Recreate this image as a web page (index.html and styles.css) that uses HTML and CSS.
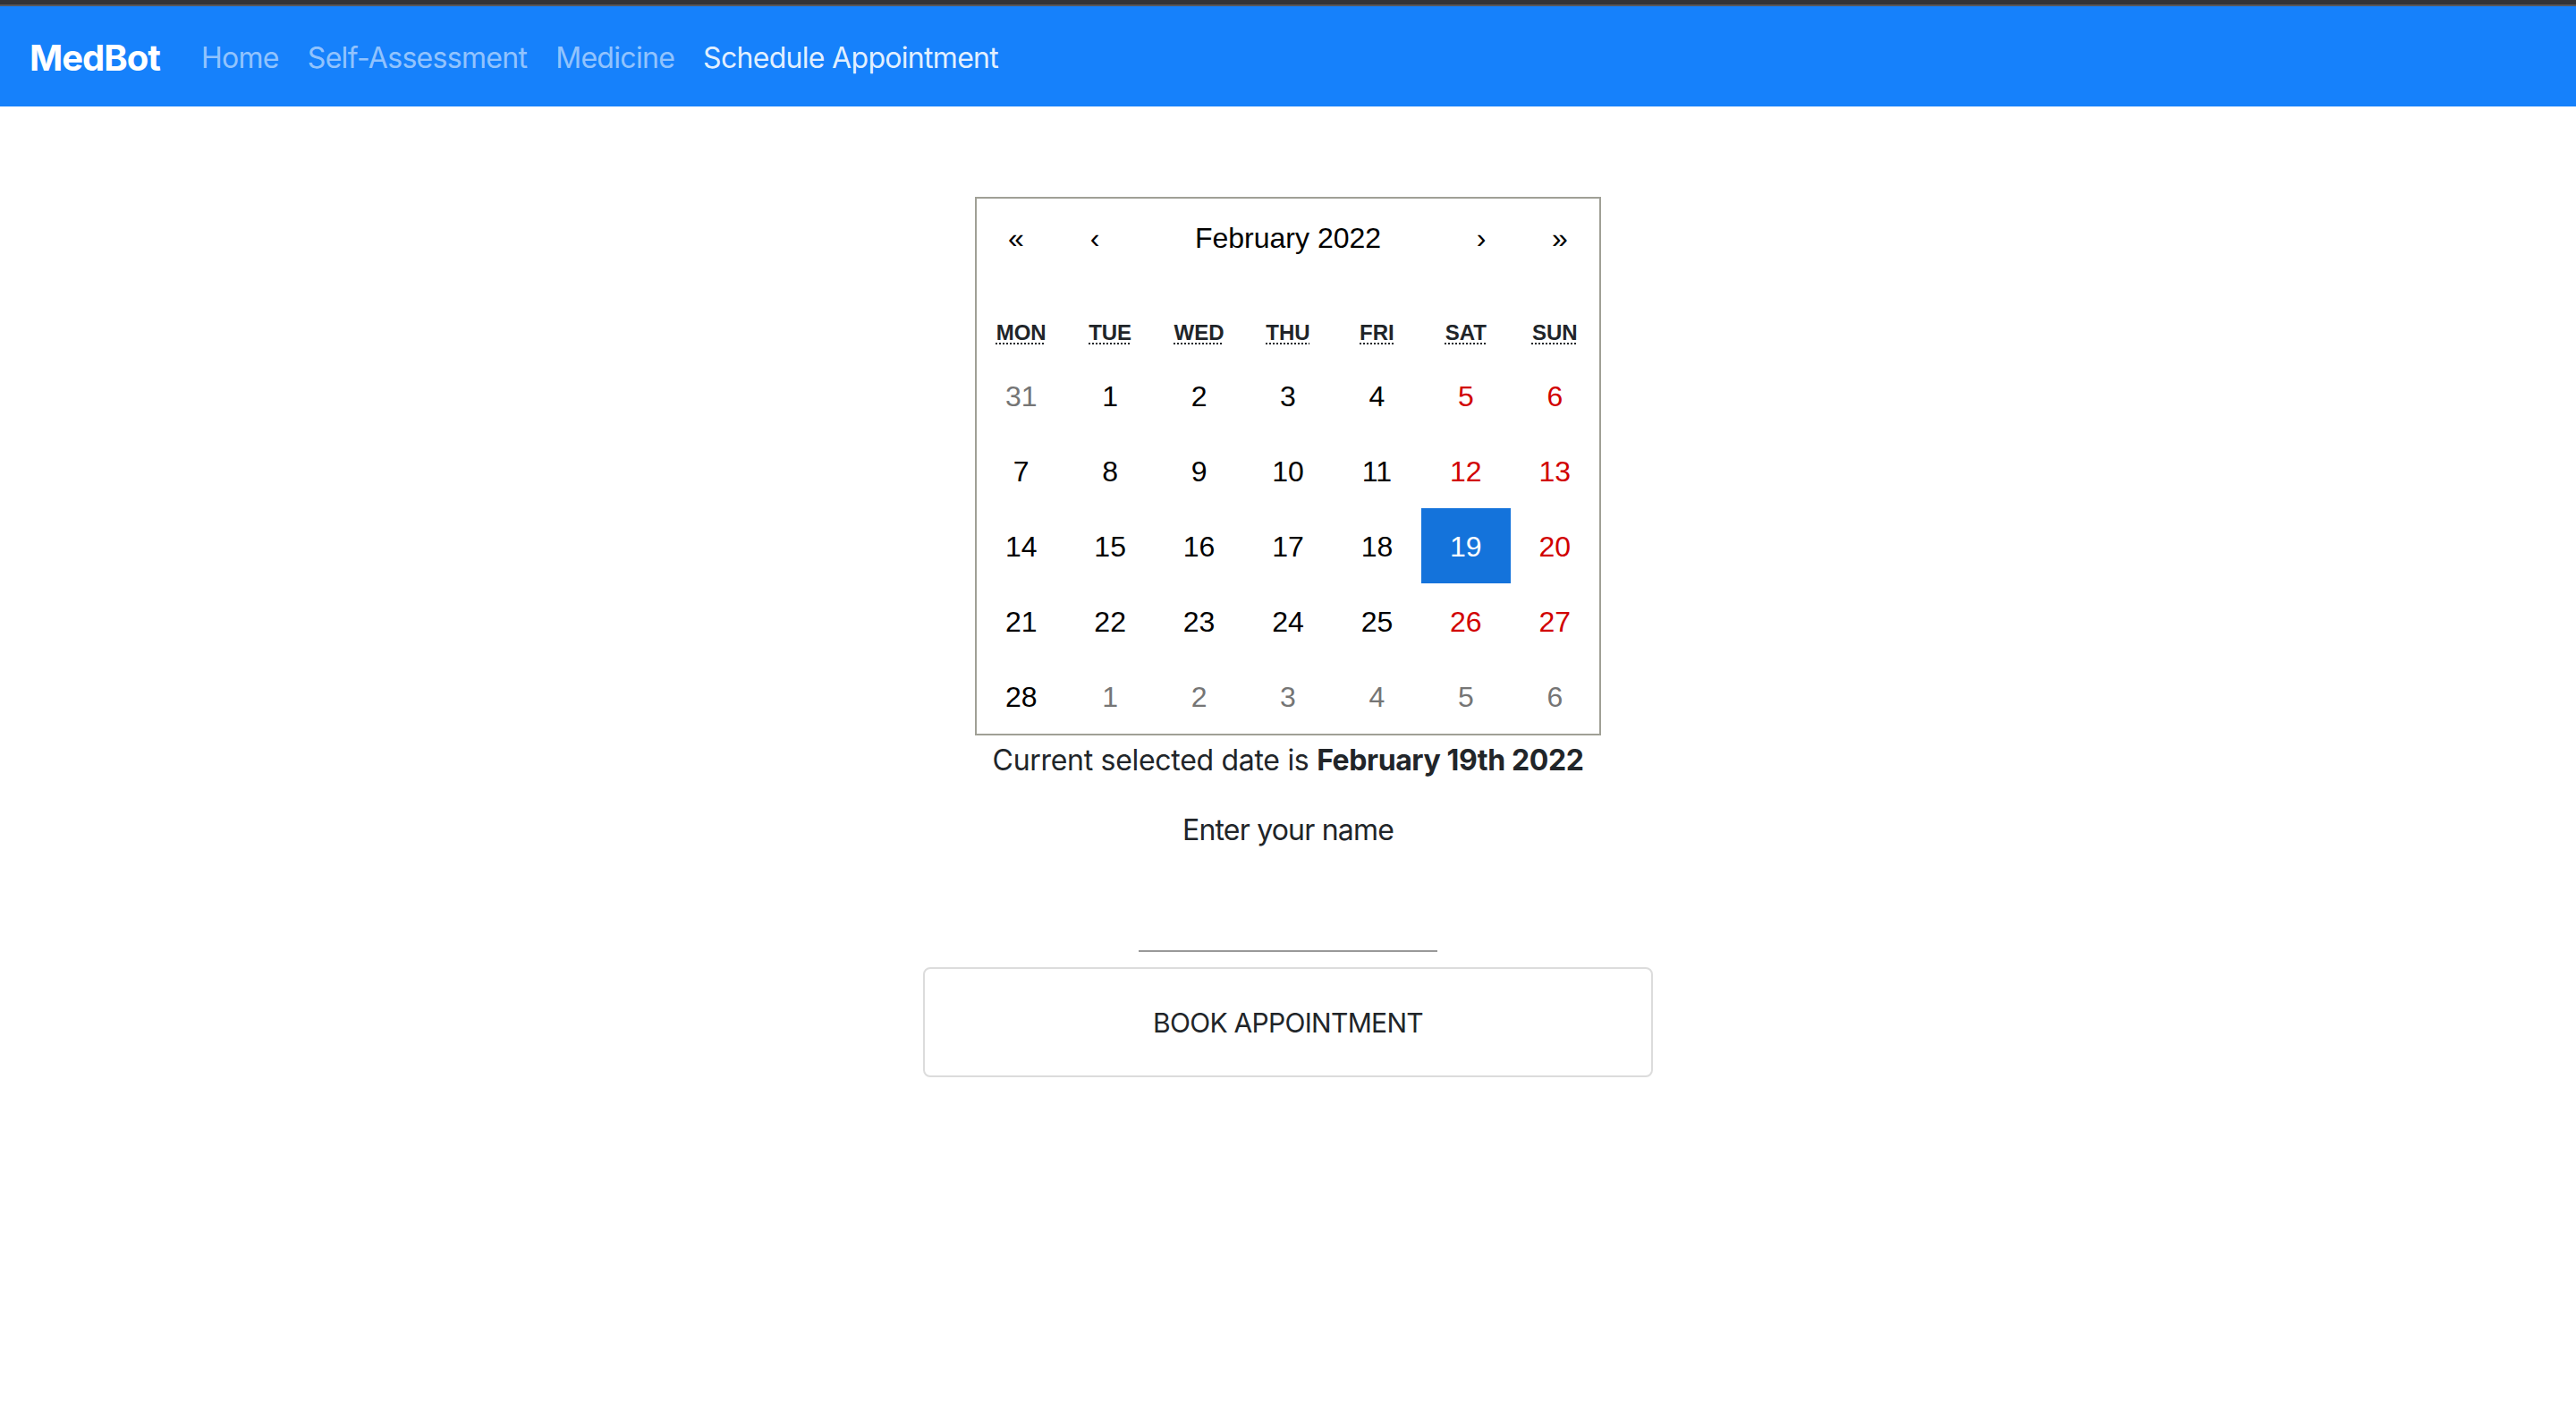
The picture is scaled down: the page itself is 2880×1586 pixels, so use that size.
FILE: index.html
```html
<!DOCTYPE html>
<html lang="en">
<head>
<meta charset="utf-8">
<title>MedBot - Schedule Appointment</title>
<link rel="stylesheet" href="styles.css">
</head>
<body>
<div class="topband"></div>
<nav class="navbar">
  <a class="brand" href="#">MedBot</a>
  <ul class="nav-links">
    <li><a class="nav-link" href="#">Home</a></li>
    <li><a class="nav-link" href="#">Self-Assessment</a></li>
    <li><a class="nav-link" href="#">Medicine</a></li>
    <li><a class="nav-link active" href="#">Schedule Appointment</a></li>
  </ul>
</nav>
<main class="page">
  <div class="calendar">
    <div class="cal-nav">
      <button class="cal-arrow">«</button>
      <button class="cal-arrow">‹</button>
      <button class="cal-label">February 2022</button>
      <button class="cal-arrow">›</button>
      <button class="cal-arrow">»</button>
    </div>
    <div class="cal-weekdays">
      <div class="wd"><abbr title="Monday">Mon</abbr></div>
      <div class="wd"><abbr title="Tuesday">Tue</abbr></div>
      <div class="wd"><abbr title="Wednesday">Wed</abbr></div>
      <div class="wd"><abbr title="Thursday">Thu</abbr></div>
      <div class="wd"><abbr title="Friday">Fri</abbr></div>
      <div class="wd"><abbr title="Saturday">Sat</abbr></div>
      <div class="wd"><abbr title="Sunday">Sun</abbr></div>
    </div>
    <div class="cal-days">
      <button class="tile other">31</button>
      <button class="tile">1</button>
      <button class="tile">2</button>
      <button class="tile">3</button>
      <button class="tile">4</button>
      <button class="tile weekend">5</button>
      <button class="tile weekend">6</button>
      <button class="tile">7</button>
      <button class="tile">8</button>
      <button class="tile">9</button>
      <button class="tile">10</button>
      <button class="tile">11</button>
      <button class="tile weekend">12</button>
      <button class="tile weekend">13</button>
      <button class="tile">14</button>
      <button class="tile">15</button>
      <button class="tile">16</button>
      <button class="tile">17</button>
      <button class="tile">18</button>
      <button class="tile active">19</button>
      <button class="tile weekend">20</button>
      <button class="tile">21</button>
      <button class="tile">22</button>
      <button class="tile">23</button>
      <button class="tile">24</button>
      <button class="tile">25</button>
      <button class="tile weekend">26</button>
      <button class="tile weekend">27</button>
      <button class="tile">28</button>
      <button class="tile other">1</button>
      <button class="tile other">2</button>
      <button class="tile other">3</button>
      <button class="tile other">4</button>
      <button class="tile other">5</button>
      <button class="tile other">6</button>
    </div>
  </div>
  <p class="selected">Current selected date is <b>February 19th 2022</b></p>
  <p class="label">Enter your name</p>
  <input class="name-input" type="text" aria-label="Enter your name">
  <button class="book-btn">BOOK APPOINTMENT</button>
</main>
</body>
</html>
```
FILE: styles.css
```css
* { box-sizing: border-box; }

html, body {
  margin: 0;
  padding: 0;
  background: #fff;
}

body {
  font-family: Inter, "Noto Sans", "Liberation Sans", sans-serif;
  color: #212529;
  font-size: 32px;
  line-height: 48px;
  letter-spacing: -0.5px;
}

.topband {
  height: 7px;
  background: #333337;
  border-bottom: 2px solid #58585c;
}

.navbar {
  height: 112px;
  background: #1681fb;
  display: flex;
  align-items: center;
  padding: 4px 0 0 33px;
}

.brand {
  font-size: 40px;
  font-weight: 700;
  color: #fff;
  text-decoration: none;
  margin-right: 30px;
  letter-spacing: -1px;
}

.nav-links {
  display: flex;
  list-style: none;
  margin: 0;
  padding: 0;
}

.nav-link {
  display: block;
  padding: 0 16px;
  font-size: 32px;
  color: rgba(255, 255, 255, 0.55);
  text-decoration: none;
  letter-spacing: -0.7px;
}

.nav-link.active {
  color: rgba(255, 255, 255, 0.9);
}

.page {
  display: flex;
  flex-direction: column;
  align-items: center;
}

.calendar {
  margin-top: 101px;
  width: 700px;
  border: 2px solid #a0a096;
  background: #fff;
  font-family: "Liberation Sans", Arial, sans-serif;
  line-height: 36px;
  letter-spacing: 0;
}

.cal-nav {
  display: flex;
  height: 88px;
  margin-bottom: 32px;
}

.cal-nav button {
  border: 0;
  background: none;
  font-family: "Liberation Sans", Arial, sans-serif;
  font-size: 32px;
  color: #000;
  padding: 0;
  margin: 0;
}

.cal-arrow {
  width: 88px;
}

.cal-label {
  flex: 1;
}

.cal-weekdays {
  display: grid;
  grid-template-columns: repeat(7, 1fr);
  height: 58px;
}

.wd {
  display: flex;
  align-items: center;
  justify-content: center;
  padding-top: 1px;
  font-size: 24px;
  font-weight: 700;
  text-transform: uppercase;
  color: #212529;
}

.wd abbr {
  text-decoration: underline dotted;
  text-decoration-thickness: 2px;
  text-underline-offset: 4px;
}

.cal-days {
  display: grid;
  grid-template-columns: repeat(7, 1fr);
  grid-auto-rows: 84px;
}

.tile {
  border: 0;
  background: none;
  margin: 0;
  padding: 3px 0 0;
  font-family: "Liberation Sans", Arial, sans-serif;
  font-size: 32px;
  color: #000;
}

.tile.weekend { color: #d10000; }
.tile.other { color: #757575; }

.tile.active {
  background: #1473db;
  color: #fff;
}

.selected {
  margin: 0 0 28px;
  padding-top: 4px;
  letter-spacing: -0.3px;
}

.selected b {
  font-weight: 700;
  letter-spacing: -0.4px;
}

.label {
  margin: 0 0 30px;
  padding-top: 2px;
  letter-spacing: -0.8px;
}

.name-input {
  width: 334px;
  height: 82px;
  border: 0;
  border-bottom: 2px solid #999;
  outline: none;
  background: transparent;
  font-family: inherit;
  font-size: 32px;
  padding: 0;
}

.book-btn {
  margin-top: 17px;
  width: 816px;
  height: 123px;
  background: #fff;
  border: 2px solid #dcdcdc;
  border-radius: 8px;
  font-family: Inter, "Noto Sans", "Liberation Sans", sans-serif;
  font-size: 30px;
  color: #212529;
  letter-spacing: -0.7px;
}
```
